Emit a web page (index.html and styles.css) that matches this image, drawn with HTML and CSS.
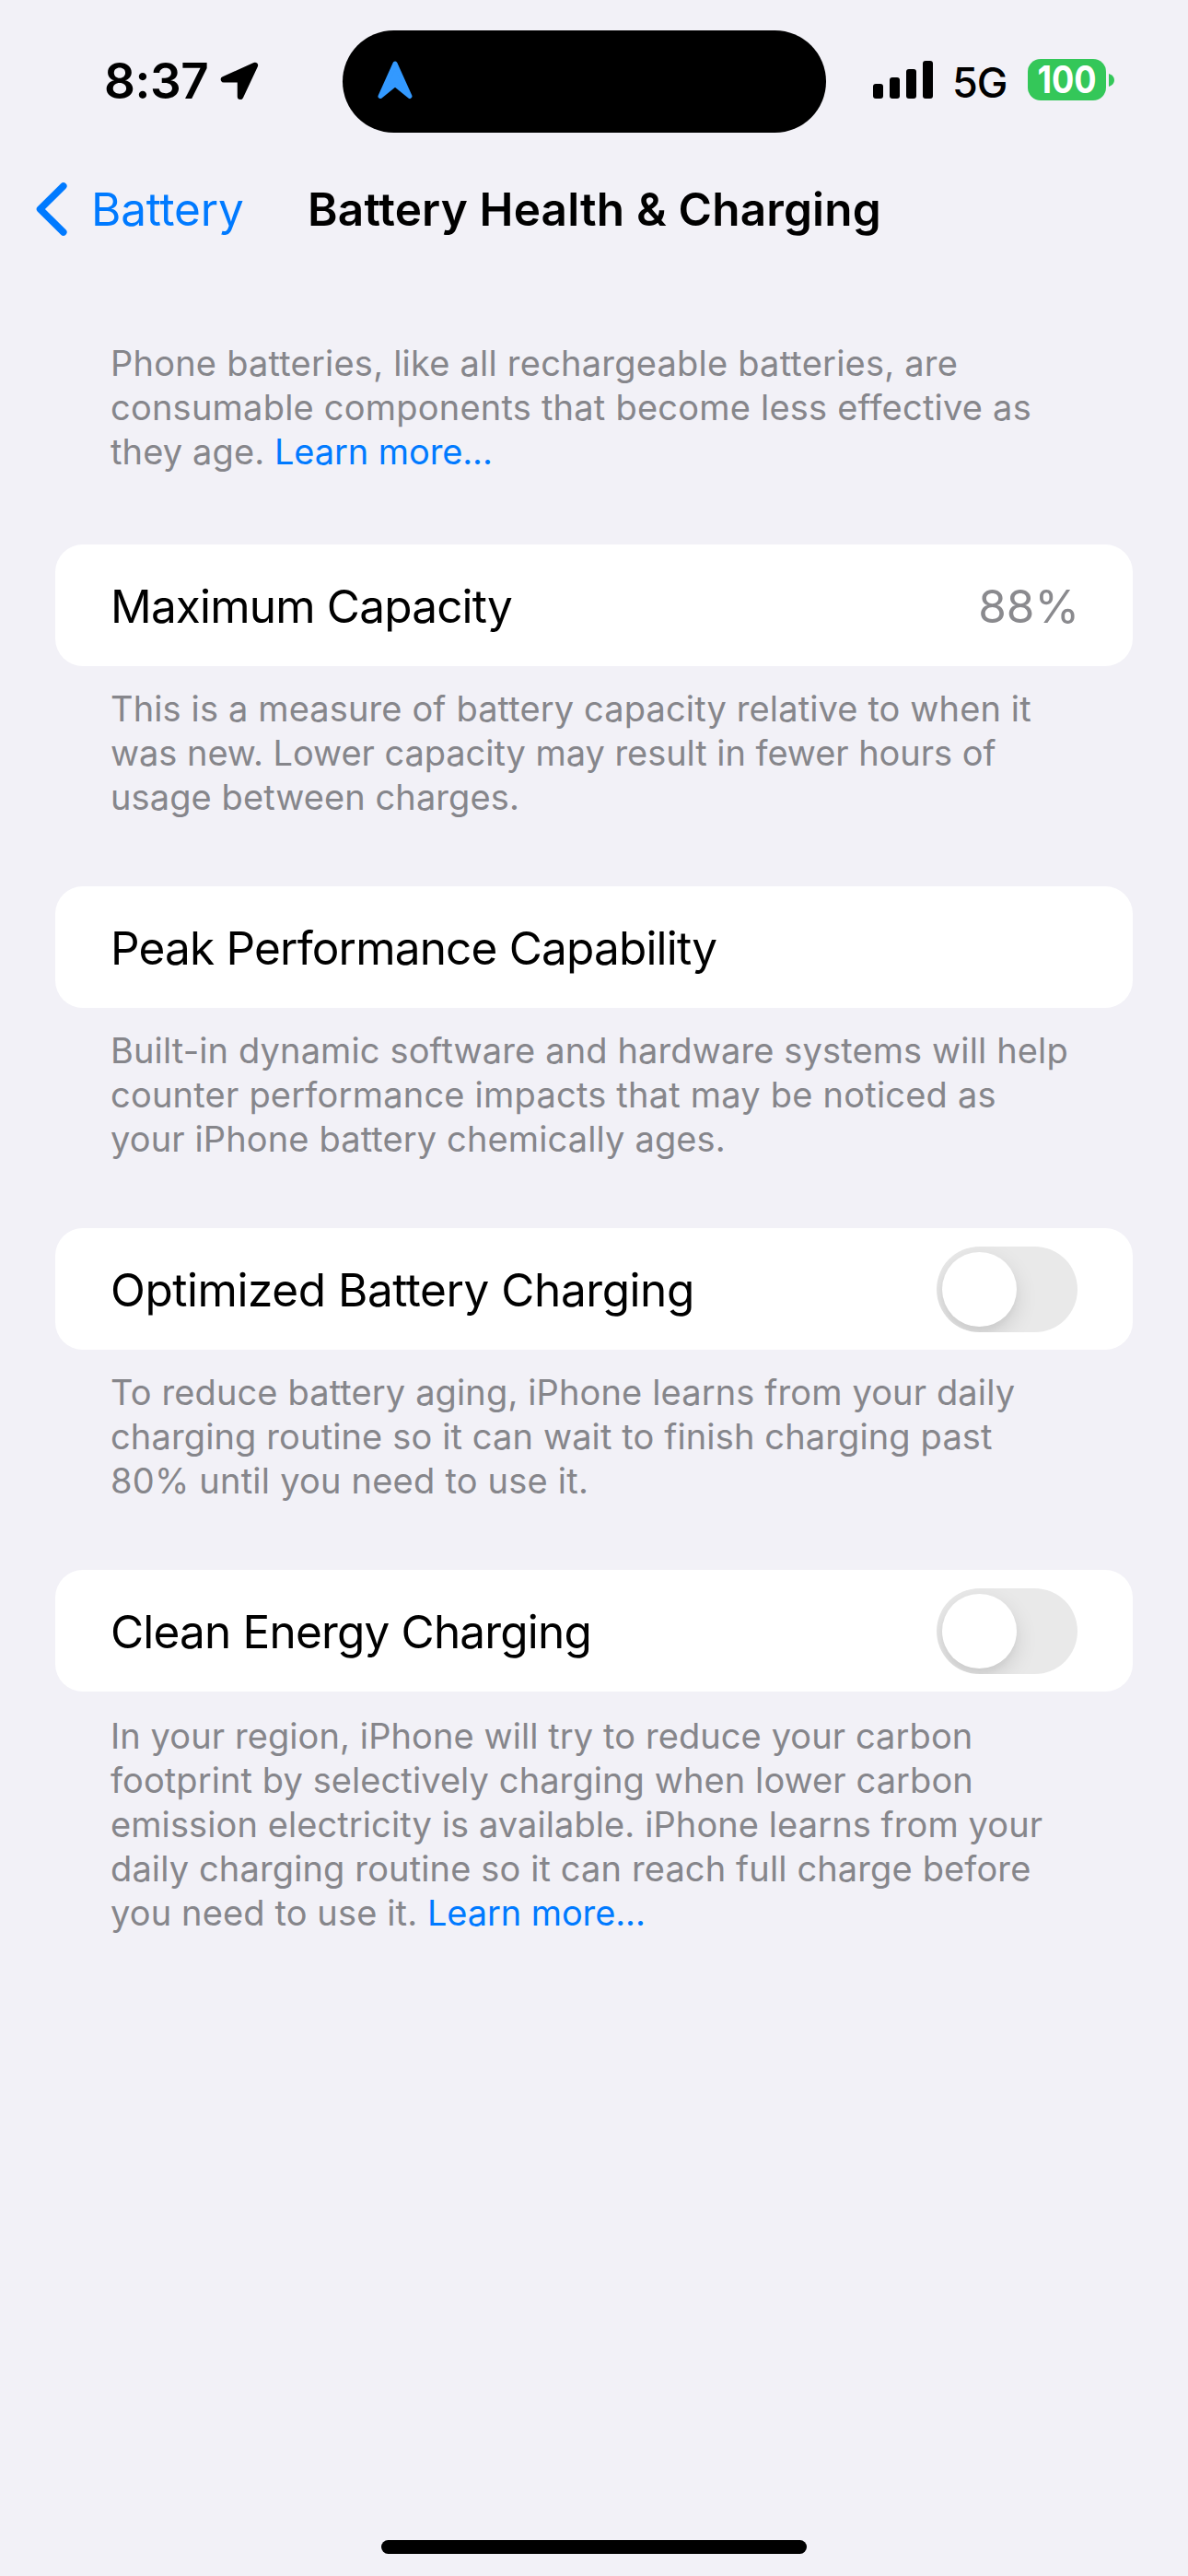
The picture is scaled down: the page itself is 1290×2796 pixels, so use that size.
FILE: index.html
```html
<!DOCTYPE html>
<html lang="en">
<head>
<meta charset="utf-8">
<title>Battery Health &amp; Charging</title>
<link rel="stylesheet" href="styles.css">
</head>
<body>
<div class="screen">
  <header class="status">
    <div class="status-left">
      <span class="time">8:37</span>
      <svg class="location" width="44" height="43" viewBox="0 0 44 43"><path d="M38.8 4 L5 19.3 H23 V37.8 Z" fill="#000" stroke="#000" stroke-width="6.5" stroke-linejoin="round"/></svg>
    </div>
    <div class="island">
      <svg width="38" height="42" viewBox="0 0 38 42"><path d="M19 3 L3 38.5 L19 25.5 L35 38.5 Z" fill="#3399ff" stroke="#3399ff" stroke-width="5" stroke-linejoin="round"/></svg>
    </div>
    <div class="status-right">
      <svg class="signal" width="65" height="41" viewBox="0 0 65 41"><rect x="0" y="25" width="11" height="16" rx="3"/><rect x="18" y="18" width="11" height="23" rx="3"/><rect x="36" y="9" width="11" height="32" rx="3"/><rect x="54" y="0" width="11" height="41" rx="3"/></svg>
      <span class="network">5G</span>
      <div class="battery"><span>100</span></div>
      <svg class="nub" width="6" height="14" viewBox="0 0 6 14"><path d="M0 0 Q6 2 6 7 Q6 12 0 14 Z" fill="#34c759"/></svg>
    </div>
  </header>
  <nav class="nav">
    <a class="back"><svg width="34" height="58" viewBox="0 0 34 58"><path d="M29.8 4 L4.5 29 L29.8 54" fill="none" stroke="#007aff" stroke-width="7.5" stroke-linecap="round" stroke-linejoin="round"/></svg><span>Battery</span></a>
    <h1>Battery Health &amp; Charging</h1>
  </nav>
  <main>
    <p class="note intro"><span class="open">Phone batteries, like all rechargeable batteries, are</span><br><span class="open">consumable components that become less effective as</span><br><span>they age.</span> <a>Learn more...</a></p>
    <section class="card"><span class="tight">Maximum Capacity</span><span class="value">88%</span></section>
    <p class="note"><span>This is a measure of battery capacity relative to when it</span><br><span class="snug">was new. Lower capacity may result in fewer hours of</span><br><span class="even">usage between charges.</span></p>
    <section class="card"><span class="tight">Peak Performance Capability</span></section>
    <p class="note"><span>Built-in dynamic software and hardware systems will help</span><br><span class="open">counter performance impacts that may be noticed as</span><br><span>your iPhone battery chemically ages.</span></p>
    <section class="card"><span>Optimized Battery Charging</span><i class="toggle"></i></section>
    <p class="note"><span>To reduce battery aging, iPhone learns from your daily</span><br><span>charging routine so it can wait to finish charging past</span><br><span class="open">80% until you need to use it.</span></p>
    <section class="card"><span class="tight">Clean Energy Charging</span><i class="toggle"></i></section>
    <p class="note last"><span class="even">In your region, iPhone will try to reduce your carbon</span><br><span class="even">footprint by selectively charging when lower carbon</span><br><span class="even">emission electricity is available. iPhone learns from your</span><br><span>daily charging routine so it can reach full charge before</span><br><span>you need to use it.</span> <a>Learn more...</a></p>
  </main>
  <div class="home"></div>
</div>
</body>
</html>
```
FILE: styles.css
```css
* { box-sizing: border-box; margin: 0; padding: 0; }
body { background: #f2f1f7; color: #000; font-family: Inter, "Liberation Sans", sans-serif; }
.screen { width: 1290px; height: 2796px; display: flex; flex-direction: column; overflow: hidden; }

.status { height: 177px; display: grid; grid-template-columns: 372px 525px 393px; align-items: start; }
.status-left { display: flex; padding: 56px 0 0 113px; }
.time { width: 125px; font-size: 53px; line-height: 64px; font-weight: 600; letter-spacing: -0.4px; }
.location { margin-top: 11px; flex: none; }
.island { height: 111px; margin-top: 33px; padding: 33px 0 0 38px; border-radius: 56px; background: #000; }
.island svg { display: block; }
.status-right { display: flex; padding-left: 51px; }
.signal { margin-top: 66px; flex: none; }
.network { width: 82px; margin: 62px 0 0 21px; font-size: 45px; line-height: 55px; font-weight: 450; letter-spacing: -1px; }
.battery { width: 85px; height: 45px; margin-top: 64px; border-radius: 14px; background: #34c759; color: #fff; font-size: 41px; line-height: 45px; font-weight: 700; display: flex; justify-content: center; flex: none; }
.battery span { transform: scaleX(.88); }
.nub { margin: 80px 0 0 3px; flex: none; }

.nav { height: 100px; display: grid; grid-template-columns: 334px 1fr; align-items: center; font-size: 49.5px; line-height: 60px; }
.back { display: flex; align-items: center; gap: 26px; padding-left: 39px; color: #007aff; letter-spacing: -0.2px; }
.nav h1 { font-size: 49.5px; font-weight: 600; letter-spacing: 0.17px; }

main { padding: 0 60px; }
.note { height: 239px; padding: 22px 0 0 60px; font-size: 38px; line-height: 48px; color: #86868b; white-space: nowrap; }
.intro { height: 314px; padding-top: 93px; }
.last { height: auto; padding-top: 24px; }
.note a { color: #007aff; letter-spacing: -0.1px; }
.note span { letter-spacing: 0.13px; }
.note .open { letter-spacing: 0.22px; }
.note .even { letter-spacing: 0.09px; }
.note .snug { letter-spacing: -0.05px; }

.card { height: 132px; padding: 2px 60px 0; border-radius: 30px; background: #fff; display: flex; align-items: center; justify-content: space-between; font-size: 49.5px; letter-spacing: -0.44px; white-space: nowrap; }
.card .tight { letter-spacing: -0.82px; }
.card .value { color: #8a8a8e; letter-spacing: 0; margin-right: -2px; }
.toggle { width: 153px; height: 93px; margin-top: -2px; padding: 6px; border-radius: 47px; background: #e9e9e9; overflow: hidden; }
.toggle::before { content: ""; display: block; width: 81px; height: 81px; border-radius: 50%; background: #fff; box-shadow: 0 9px 24px rgba(0,0,0,.12), 0 6px 7px rgba(0,0,0,.03); }

.home { width: 462px; height: 15px; margin: auto auto 24px; border-radius: 8px; background: #000; }
```
